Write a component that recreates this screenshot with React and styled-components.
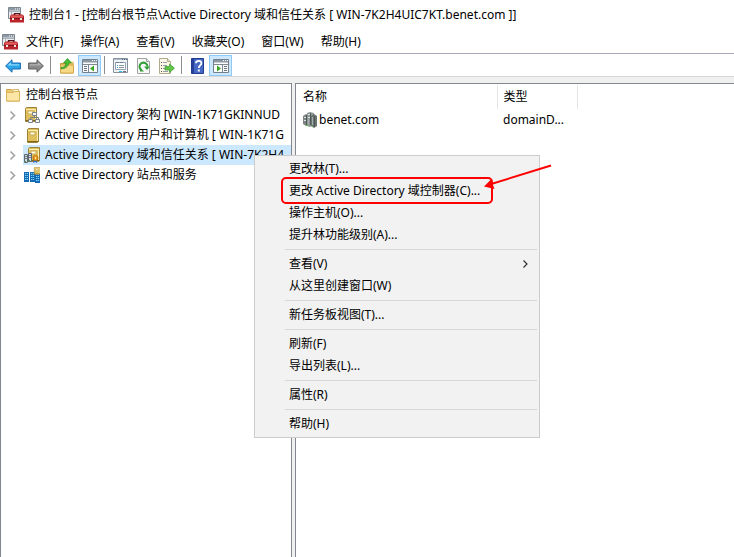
import React from "react";
import styled, { createGlobalStyle } from "styled-components";

const treeItems = [
  { label: "Active Directory 架构 [WIN-1K71GKINNUD", icon: "schema" },
  { label: "Active Directory 用户和计算机 [ WIN-1K71G", icon: "users" },
  { label: "Active Directory 域和信任关系 [ WIN-7K2H4", icon: "trusts", selected: true },
  { label: "Active Directory 站点和服务", icon: "sites" },
];

const menus = ["文件(F)", "操作(A)", "查看(V)", "收藏夹(O)", "窗口(W)", "帮助(H)"];

const contextGroups = [
  ["更改林(T)...", "更改 Active Directory 域控制器(C)...", "操作主机(O)...", "提升林功能级别(A)..."],
  ["查看(V)", "从这里创建窗口(W)"],
  ["新任务板视图(T)..."],
  ["刷新(F)", "导出列表(L)..."],
  ["属性(R)"],
  ["帮助(H)"],
];

const App = () => {
  return (
    <Window>
      <GlobalStyle />
      <TitleBar>
        <ConsoleIcon />
        <Title>控制台1 - [控制台根节点\Active Directory 域和信任关系 [ WIN-7K2H4UIC7KT.benet.com ]]</Title>
      </TitleBar>
      <MenuBar>
        <ConsoleIcon />
        {menus.map((menu) => (
          <MenuButton key={menu}>{menu}</MenuButton>
        ))}
      </MenuBar>
      <Toolbar>
        <ToolButton aria-label="后退">
          <ArrowIcon fill="#2aa4e8" stroke="#1668b4" shine="#8ad8fa" />
        </ToolButton>
        <ToolButton aria-label="前进">
          <ArrowIcon flip fill="#8a8a8a" stroke="#606060" shine="#b4b4b4" />
        </ToolButton>
        <Divider />
        <ToolButton aria-label="上一级">
          <UpFolderIcon />
        </ToolButton>
        <ToolButton aria-label="显示/隐藏控制台树" $active>
          <PaneIcon />
        </ToolButton>
        <Divider />
        <ToolButton aria-label="属性">
          <PropertiesIcon />
        </ToolButton>
        <ToolButton aria-label="刷新">
          <RefreshIcon />
        </ToolButton>
        <ToolButton aria-label="导出列表">
          <ExportIcon />
        </ToolButton>
        <Divider />
        <ToolButton aria-label="帮助">
          <HelpIcon />
        </ToolButton>
        <ToolButton aria-label="显示/隐藏操作窗格" $active>
          <PaneIcon right />
        </ToolButton>
      </Toolbar>
      <Content>
        <TreePane>
          <RootRow>
            <FolderIcon />
            <span>控制台根节点</span>
          </RootRow>
          <Tree>
            {treeItems.map((item) => (
              <TreeRow key={item.icon}>
                <Chevron />
                <TreeLabel $selected={item.selected}>
                  <TreeIcon kind={item.icon} />
                  <span>{item.label}</span>
                </TreeLabel>
              </TreeRow>
            ))}
          </Tree>
        </TreePane>
        <ListPane>
          <List>
            <thead>
              <tr>
                <HeadCell $width={194}>名称</HeadCell>
                <HeadCell $width={80}>类型</HeadCell>
                <th />
              </tr>
            </thead>
            <tbody>
              <tr>
                <Cell>
                  <CellContent>
                    <DomainIcon />
                    benet.com
                  </CellContent>
                </Cell>
                <Cell $indent>domainD...</Cell>
                <td />
              </tr>
            </tbody>
          </List>
        </ListPane>
      </Content>
      <ContextMenu role="menu">
        {contextGroups.map((group, i) => (
          <Group key={i} role="group">
            {group.map((label) => (
              <MenuItem key={label} role="menuitem">
                {label}
                {label === "查看(V)" && <SubmenuArrow />}
              </MenuItem>
            ))}
          </Group>
        ))}
        <Annotation />
      </ContextMenu>
    </Window>
  );
};

const ConsoleIcon = () => (
  <svg width="16" height="16" viewBox="0 0 16 16">
    <path d="M0.5 0.5h12v11h-12z" fill="#e9edf0" stroke="#7d8790" />
    <path d="M1 1h11v2.5H1z" fill="#8d99a4" />
    <path d="M7 2h1M9 2h1M11 2h1" stroke="#fff" />
    <path d="M1 4.5h11M3.5 5v6M5 7.5h3" stroke="#a9b2ba" />
    <path d="M6.5 8V6.5h5V8" fill="none" stroke="#4b1414" strokeWidth="1.2" />
    <path d="M2 9 3.5 7.5h11L16 9v6.5H2z" fill="#b9252b" />
    <path d="M3 8.5h12v2H3z" fill="#e4605c" />
    <path d="M2 11.5h14" stroke="#7a1519" />
    <path d="M4 11h2v2H4zM12 11h2v2h-2z" fill="#f2e3df" />
  </svg>
);

const ArrowIcon = ({ flip, fill, stroke, shine }) => (
  <svg width="16" height="16" viewBox="0 0 16 16">
    <g transform={flip ? "matrix(-1 0 0 1 16 0)" : undefined}>
      <path d="M0.6 8 7 1.8V5h8.4v6H7v3.2z" fill={fill} stroke={stroke} strokeLinejoin="round" />
      <path d="M2.4 7.6 6 4.2V6.2h8.3v1.4z" fill={shine} />
    </g>
  </svg>
);

const UpFolderIcon = () => (
  <svg width="16" height="16" viewBox="0 0 16 16">
    <path d="M1.5 15V5.5h6l1-2h5.5V15z" fill="#edc765" stroke="#c99a3a" />
    <path d="M1.5 15V7h13v8z" fill="#f6d987" stroke="#d4a84a" />
    <path d="M10 3h4v1.5h-4z" fill="#fff5cf" />
    <path d="M2 9.5C5 9.5 7 8 7 5H4.5L8.5 0.5 12.5 5H9.8C9.5 8.5 6 11 2 10.8z" fill="#49bd35" stroke="#268d1f" strokeWidth="0.7" />
  </svg>
);

const PaneIcon = ({ right }) => (
  <svg width="16" height="14" viewBox="0 0 16 14">
    <path d="M0.5 0.5h15v13h-15z" fill="#fbfbfb" stroke="#74808b" />
    <path d="M1 1h14v2H1z" fill="#8c98a4" />
    <path d="M10 1.5h1M12 1.5h1M14 1.5h1" stroke="#fff" />
    <path d="M1 3.5h14" stroke="#c5ccd2" />
    <path d="M1 5.5h14" stroke="#7e8993" />
    {right ? (
      <g>
        <path d="M9.5 6v7" stroke="#7e8993" />
        <path d="M4 6.5v6L8 9.5z" fill="#36a81f" />
        <path d="M11 7.5h3M11 9.5h3M11 11.5h3" stroke="#68747f" />
      </g>
    ) : (
      <g>
        <path d="M6.5 6v7" stroke="#7e8993" />
        <path d="M12 6.5v6L8 9.5z" fill="#36a81f" />
        <path d="M2 7.5h3M2 9.5h3M2 11.5h3" stroke="#68747f" />
      </g>
    )}
  </svg>
);

const PropertiesIcon = () => (
  <svg width="16" height="16" viewBox="0 0 16 16">
    <path d="M0.5 0.5h14v14h-14z" fill="#f0f2f4" stroke="#84909b" />
    <path d="M1 1.5h13" stroke="#b5bec6" />
    <path d="M9 1.5h1M11 1.5h1M13 1.5h1" stroke="#596673" />
    <path d="M2.5 4.5h10v7h-10z" fill="#fff" stroke="#94a3b4" />
    <path d="M3 4.5h3M7 4.5h3" stroke="#637d99" />
    <path d="M4 7.5h1M4 9.5h1" stroke="#3f8fc9" />
    <path d="M6 7.5h5M6 9.5h5" stroke="#8a949d" />
    <path d="M6 13.5h3" stroke="#25c3ec" />
    <path d="M10 13.5h3" stroke="#69747e" />
  </svg>
);

const RefreshIcon = () => (
  <svg width="14" height="16" viewBox="0 0 14 16">
    <path d="M0.5 0.5h9l3 3v12h-12z" fill="#f8f8f8" stroke="#a2a2a2" />
    <path d="M9.5 0.5v3h3" fill="#e2e2e2" stroke="#a2a2a2" />
    <path d="M4.3 12A4 4 0 1 1 10.5 8.5" fill="none" stroke="#2f9e35" strokeWidth="2" />
    <path d="M7 8.5h6L10 12z" fill="#2f9e35" />
    <path d="M3 9.5v4h4z" fill="#2f9e35" />
  </svg>
);

const ExportIcon = () => (
  <svg width="16" height="16" viewBox="0 0 16 16">
    <path d="M0.5 0.5h8l3 3v12h-11z" fill="#fdf8e5" stroke="#b3a98d" />
    <path d="M8.5 0.5v3h3" fill="#e9e0c4" stroke="#b3a98d" />
    <path d="M2 4.5h1M2 7.5h1M2 10.5h1M2 13.5h1" stroke="#54504b" />
    <path d="M4 4.5h4M4 7.5h4M4 10.5h4M4 13.5h5" stroke="#9a9ab0" />
    <path d="M6 8.5h4.5V6l5 4.2-5 4.3V12H6z" fill="#63c548" stroke="#36982b" strokeWidth="0.7" />
  </svg>
);

const HelpIcon = () => (
  <svg width="14" height="16" viewBox="0 0 14 16">
    <path d="M0.5 0.5h12v15h-12z" fill="#4468c4" stroke="#213b91" />
    <path d="M1 1h2v14H1z" fill="#263f98" />
    <path d="M5 5.2C5 2 10.4 2 10.4 5.2 10.4 7.5 7.8 7.4 7.8 10" fill="none" stroke="#fff" strokeWidth="1.8" />
    <path d="M6.8 11.5h2v2h-2z" fill="#fff" />
  </svg>
);

const FolderIcon = () => (
  <svg width="16" height="16" viewBox="0 0 16 16">
    <path d="M1.5 14V2.5h5l1 1.5h7V14z" fill="#efcb70" stroke="#d3a548" />
    <path d="M8 2.5h5.5V5H8z" fill="#fff8df" stroke="#d3b66f" />
    <path d="M1.5 5.5h7l1-1h5v9.5h-13z" fill="#fbe6a5" stroke="#dbb35b" />
  </svg>
);

const Book = ({ x = 0, y = 0, scale = 1 }) => (
  <g transform={`translate(${x} ${y}) scale(${scale})`}>
    <path d="M0.5 1.5 1.5 0.5h10v13l-1 1h-10z" fill="#dfc05c" stroke="#9c8136" />
    <path d="M1 2.5h9.5V14" fill="none" stroke="#fff0ad" />
    <path d="M3 4h5v3H3z" fill="#fffbe8" stroke="#c9ad58" />
    <path d="M0.5 13.5h11" stroke="#806719" />
  </g>
);

const Server = ({ x, y }) => (
  <g transform={`translate(${x} ${y})`}>
    <path d="M0.5 0.5h3v8h-3z" fill="#d5dce1" stroke="#5e6972" />
    <path d="M1 2.5h2M1 4.5h2" stroke="#77848f" />
    <path d="M1 7h1v1H1z" fill="#35b42d" />
  </g>
);

const Building = ({ x, y }) => (
  <g transform={`translate(${x} ${y})`}>
    <path d="M0 1h5v10H0z" fill="#1769b6" />
    <path d="M1 2.5h3M1 4.5h3M1 6.5h3M1 8.5h3" stroke="#75d6fa" />
    <path d="M2.5 2v8" stroke="#1769b6" strokeWidth="0.6" />
  </g>
);

const TreeIcon = ({ kind }) => (
  <svg width="16" height="16" viewBox="0 0 16 16">
    {kind === "schema" && (
      <g>
        <Book x={1} y={0} />
        <path d="M10.5 8v2M6.5 13v-2.5h8V13" fill="none" stroke="#7b7b7b" />
        <path d="M8.5 5.5h4v3h-4zM4.5 12.5h4v3h-4zM11.5 12.5h4v3h-4z" fill="#f4f4f4" stroke="#7b838b" />
      </g>
    )}
    {kind === "users" && <Book x={3} y={1} />}
    {kind === "trusts" && (
      <g>
        <Book x={4} y={0} />
        <Server x={0} y={7} />
        <Server x={4} y={6} />
        <path d="m10 12-1 4 2-1 2 1v-4z" fill="#3872c4" />
        <circle cx="11.5" cy="11" r="2.5" fill="#f2a51f" stroke="#bb6d10" />
        <path d="M11 10h1v2h-1z" fill="#ffe59b" />
      </g>
    )}
    {kind === "sites" && (
      <g>
        <Building x={0} y={4} />
        <Building x={6} y={4} />
        <Building x={11} y={5} />
        <Book x={10} y={0} scale={0.5} />
      </g>
    )}
  </svg>
);

const DomainIcon = () => (
  <svg width="16" height="16" viewBox="0 0 16 16">
    <path d="M0 4l3-2 2 1v10l-2 1-3-2z" fill="#7d8484" />
    <path d="M4 1l3-1 4 1v12l-4 2-3-1z" fill="#8f9797" />
    <path d="M8 4l3-2 3 2v10l-3 2-3-2z" fill="#6a7272" />
    <path d="M1 5.5h2M1 8.5h2M5 2.5h2M5 5.5h2" stroke="#dce1e1" />
    <path d="M7.5 1v12M11.5 4v11M3.5 3v10" stroke="#505858" />
    <path d="M9.5 5v8M5.5 7v5" stroke="#a6afaf" />
    <path d="M3 13h2v1H3zM9 14h1v1H9z" fill="#54c143" />
  </svg>
);

const Chevron = () => (
  <svg width="22" height="12" viewBox="0 0 22 12">
    <path d="M9.5 2.5 13.5 6.5l-4 4" fill="none" stroke="#a2a2a2" strokeWidth="1.6" />
  </svg>
);

const SubmenuArrow = () => (
  <svg width="8" height="10" viewBox="0 0 8 10">
    <path d="M1.5 1.5 5 5 1.5 8.5" fill="none" stroke="#333" strokeWidth="1.2" />
  </svg>
);

const Annotation = () => (
  <Overlay width="276" height="46" viewBox="0 0 276 46">
    <rect x="2" y="16" width="210" height="25" rx="4" fill="none" stroke="#f00" strokeWidth="2" />
    <path d="M271 3.5 208 23" stroke="#f00" strokeWidth="2" />
    <path d="M204 24.5 211 17.5 214.5 27z" fill="#f00" />
  </Overlay>
);

const GlobalStyle = createGlobalStyle`
  * {
    box-sizing: border-box;
  }

  body {
    margin: 0;
    overflow: hidden;
    background: white;
    color: black;
    font-family: "Noto Sans", "Noto Sans CJK SC", sans-serif;
    font-size: 12px;
    line-height: 20px;
  }

  button {
    border: 0;
    padding: 0;
    background: none;
    color: inherit;
    font: inherit;
  }

  svg {
    flex-shrink: 0;
  }
`;

const Window = styled.div`
  display: flex;
  flex-direction: column;
  height: 100vh;
  position: relative;
`;

const TitleBar = styled.header`
  display: flex;
  align-items: center;
  gap: 5px;
  height: 30px;
  padding: 0 8px;
`;

const Title = styled.h1`
  margin: 0;
  font-size: 12px;
  font-weight: 400;
  white-space: nowrap;
`;

const MenuBar = styled.nav`
  display: flex;
  align-items: center;
  height: 24px;
  padding: 0 2px;
  border-bottom: 1px solid #a9acb8;
`;

const MenuButton = styled.button`
  padding: 0 8px;
  white-space: nowrap;

  & + & {
    margin-left: 1px;
  }
`;

const Toolbar = styled.div`
  display: flex;
  align-items: flex-end;
  height: 23px;
  padding: 0 1px;
  border-bottom: 1px solid #d8d8d8;
`;

const ToolButton = styled.button`
  display: flex;
  align-items: center;
  justify-content: center;
  width: 23px;
  height: 21px;
  border: 1px solid ${(props) => (props.$active ? "#90c8f6" : "transparent")};
  background: ${(props) => (props.$active ? "#cce8ff" : "none")};
`;

const Divider = styled.span`
  width: 1px;
  height: 18px;
  margin: 0 4px 2px 3px;
  background: #8d8d8d;
`;

const Content = styled.main`
  display: flex;
  flex: 1;
  gap: 3px;
  min-height: 0;
  padding-top: 6px;
  background: #f0f0f0;
`;

const TreePane = styled.section`
  flex: 0 0 292px;
  padding-top: 1px;
  border: 1px solid #828790;
  border-bottom: 0;
  background: white;
  overflow: hidden;
`;

const RootRow = styled.div`
  display: flex;
  align-items: center;
  gap: 5px;
  height: 20px;
  padding-left: 4px;
`;

const Tree = styled.ul`
  margin: 0;
  padding: 0;
  list-style: none;
`;

const TreeRow = styled.li`
  display: flex;
  align-items: center;
  height: 20px;
`;

const TreeLabel = styled.div`
  display: flex;
  flex: 1;
  align-items: center;
  gap: 5px;
  height: 20px;
  padding-left: 1px;
  background: ${(props) => (props.$selected ? "#cce8ff" : "none")};
  white-space: nowrap;
  overflow: hidden;
`;

const ListPane = styled.section`
  flex: 1;
  min-width: 0;
  padding: 1px 0 0 7px;
  border: 1px solid #828790;
  border-width: 1px 0 0 1px;
  background: white;
`;

const List = styled.table`
  width: 100%;
  border-collapse: collapse;
  table-layout: fixed;
`;

const HeadCell = styled.th`
  width: ${(props) => props.$width}px;
  height: 24px;
  padding: 0;
  border-right: 1px solid #e5e5e5;
  font-weight: 400;
  text-align: left;

  & + & {
    padding-left: 6px;
  }
`;

const Cell = styled.td`
  height: 22px;
  padding: 0 0 0 ${(props) => (props.$indent ? "6px" : "0")};
  white-space: nowrap;
`;

const CellContent = styled.div`
  display: flex;
  align-items: center;
`;

const ContextMenu = styled.div`
  position: absolute;
  top: 155px;
  left: 254px;
  width: 286px;
  padding: 2px;
  border: 1px solid #ccc;
  background: #f2f2f2;
`;

const Group = styled.div`
  & + & {
    margin-top: 3px;
    padding-top: 3px;
    border-top: 1px solid #d7d7d7;
  }

  margin-left: 28px;
`;

const MenuItem = styled.button`
  display: flex;
  align-items: center;
  justify-content: space-between;
  width: 100%;
  height: 22px;
  padding: 0 7px 0 4px;
  white-space: nowrap;
`;

const Overlay = styled.svg`
  position: absolute;
  top: 6px;
  left: 25px;
  pointer-events: none;
`;

export default App;
